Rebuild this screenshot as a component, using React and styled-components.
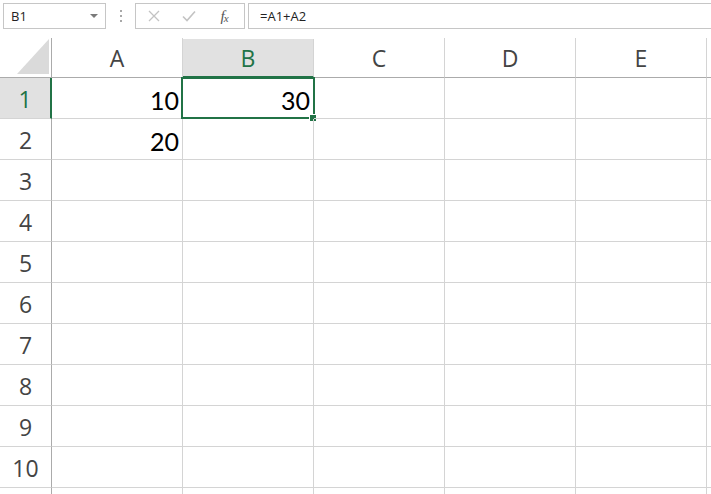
import React from "react";
import styled, { createGlobalStyle } from "styled-components";

const GlobalStyle = createGlobalStyle`
  html, body {
    margin: 0;
    padding: 0;
    background: #ffffff;
    overflow: hidden;
  }
  * {
    box-sizing: border-box;
  }
`;

const GREEN = "#217346";
const COLUMNS = ["A", "B", "C", "D", "E", "F"];
const ROWS = [1, 2, 3, 4, 5, 6, 7, 8, 9, 10, 11];
const VALUES = { A1: "10", A2: "20", B1: "30" };

const Sheet = styled.div`
  width: 711px;
  height: 494px;
  overflow: hidden;
  font-family: "Open Sans", "Liberation Sans", sans-serif;
`;

// formula bar on top
const FormulaBar = styled.div`
  display: flex;
  align-items: stretch;
  height: 29px;
  padding: 3px 0 0 3px;
`;

const NameBox = styled.div`
  position: relative;
  width: 103px;
  height: 26px;
  border: 1px solid #c6c6c6;
  display: flex;
  align-items: center;
  padding-left: 7px;
  font-size: 13px;
  color: #222;
`;

const DropArrow = styled.span`
  position: absolute;
  right: 7px;
  top: 10px;
  width: 0;
  height: 0;
  border-left: 4px solid transparent;
  border-right: 4px solid transparent;
  border-top: 4px solid #7a7a7a;
`;

const Grip = styled.div`
  width: 29px;
  display: flex;
  flex-direction: column;
  align-items: center;
  justify-content: center;
  gap: 3px;

  span {
    width: 2px;
    height: 2px;
    background: #a8a8a8;
  }
`;

const ButtonGroup = styled.div`
  width: 110px;
  height: 26px;
  border: 1px solid #c6c6c6;
  display: flex;
  align-items: center;
  justify-content: space-between;
  padding: 0 8px 0 6px;
`;

const BarButton = styled.span`
  width: 24px;
  display: flex;
  justify-content: center;
  align-items: center;
`;

const FxLabel = styled.span`
  font-family: "Liberation Serif", serif;
  font-style: italic;
  font-size: 15px;
  color: #555;
  letter-spacing: -1px;

  sub {
    font-size: 11px;
    vertical-align: -1px;
  }
`;

const FormulaInput = styled.div`
  flex: 1;
  height: 26px;
  margin-left: 3px;
  border: 1px solid #c6c6c6;
  border-right: none;
  display: flex;
  align-items: center;
  padding-left: 11px;
  font-size: 13px;
  color: #222;
`;

// the grid itself
const Grid = styled.div`
  margin-top: 9px;
  display: grid;
  grid-template-columns: 52px repeat(6, 131px);
  grid-template-rows: 40px repeat(11, 41px);
`;

const Corner = styled.div`
  position: relative;
  border-right: 1px solid #ababab;
  border-bottom: 1px solid #ababab;

  &::after {
    content: "";
    position: absolute;
    left: 17px;
    top: 1px;
    width: 32px;
    height: 35px;
    background: #dadada;
    clip-path: polygon(100% 0, 100% 100%, 0 100%);
  }
`;

const ColHeader = styled.div`
  display: flex;
  align-items: center;
  justify-content: center;
  font-size: 23px;
  padding-top: 1px;
  color: ${(p) => (p.$active ? GREEN : "#444")};
  background: ${(p) => (p.$active ? "#e1e1e1" : "#fff")};
  border-right: 1px solid #d4d4d4;
  border-bottom: ${(p) => (p.$active ? `2px solid ${GREEN}` : "1px solid #ababab")};
  margin-top: ${(p) => (p.$active ? "1px" : "0")};
`;

const RowHeader = styled.div`
  display: flex;
  align-items: center;
  justify-content: center;
  font-size: 23px;
  padding-top: 2px;
  color: ${(p) => (p.$active ? GREEN : "#444")};
  background: ${(p) => (p.$active ? "#e1e1e1" : "#fff")};
  border-right: ${(p) => (p.$active ? `2px solid ${GREEN}` : "1px solid #ababab")};
  border-bottom: 1px solid #d4d4d4;
`;

const Cell = styled.div`
  position: relative;
  display: flex;
  align-items: center;
  justify-content: flex-end;
  padding: 3px 3px 0 0;
  font-family: Lato, "Liberation Sans", sans-serif;
  font-size: 25px;
  color: #000;
  border-right: 1px solid #d4d4d4;
  border-bottom: 1px solid #d4d4d4;

  ${(p) =>
    p.$selected &&
    `
    &::before {
      content: "";
      position: absolute;
      left: -2px;
      top: -1px;
      right: -2px;
      bottom: -1px;
      border: 2px solid ${GREEN};
      pointer-events: none;
    }
    &::after {
      content: "";
      position: absolute;
      right: -4px;
      bottom: -4px;
      width: 6px;
      height: 6px;
      background: ${GREEN};
      border: 1px solid #fff;
    }
  `}
`;

function CancelIcon() {
  return (
    <svg width="12" height="12" viewBox="0 0 12 12">
      <path d="M1 1 L11 11 M11 1 L1 11" stroke="#c3c3c3" strokeWidth="1.3" fill="none" />
    </svg>
  );
}

function CheckIcon() {
  return (
    <svg width="14" height="12" viewBox="0 0 14 12">
      <path d="M1 6.5 L5 10.5 L13 1.5" stroke="#c3c3c3" strokeWidth="1.6" fill="none" />
    </svg>
  );
}

export default function App() {
  return (
    <Sheet>
      <GlobalStyle />
      <FormulaBar>
        <NameBox>
          B1
          <DropArrow />
        </NameBox>
        <Grip>
          <span />
          <span />
          <span />
        </Grip>
        <ButtonGroup>
          <BarButton>
            <CancelIcon />
          </BarButton>
          <BarButton>
            <CheckIcon />
          </BarButton>
          <BarButton>
            <FxLabel>
              f<sub>x</sub>
            </FxLabel>
          </BarButton>
        </ButtonGroup>
        <FormulaInput>=A1+A2</FormulaInput>
      </FormulaBar>

      <Grid>
        <Corner />
        {COLUMNS.map((c) => (
          <ColHeader key={c} $active={c === "B"}>
            {c}
          </ColHeader>
        ))}
        {ROWS.map((r) => (
          <React.Fragment key={r}>
            <RowHeader $active={r === 1}>{r}</RowHeader>
            {COLUMNS.map((c) => (
              <Cell key={c + r} $selected={c === "B" && r === 1}>
                {VALUES[c + r]}
              </Cell>
            ))}
          </React.Fragment>
        ))}
      </Grid>
    </Sheet>
  );
}
